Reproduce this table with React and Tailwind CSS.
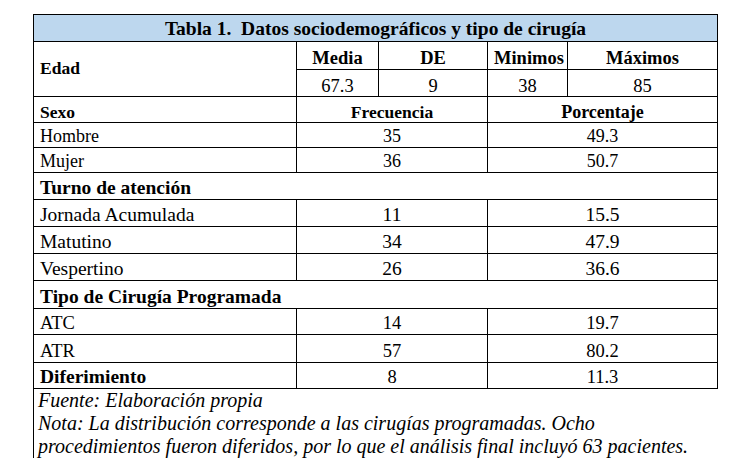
import React from "react";

const sexo = [
  ["Hombre", "35", "49.3"],
  ["Mujer", "36", "50.7"],
];

const turno = [
  ["Jornada Acumulada", "11", "15.5"],
  ["Matutino", "34", "47.9"],
  ["Vespertino", "26", "36.6"],
];

const cirugia = [
  ["ATC", "14", "19.7"],
  ["ATR", "57", "80.2"],
];

const cell = "border border-black px-[6px] p-0 align-bottom leading-none";

function DataRow({ label, freq, pct, h, size }) {
  return (
    <tr className={h}>
      <td className={`${cell} ${size} pb-[2px]`}>{label}</td>
      <td colSpan={2} className={`${cell} ${size} text-center pb-[2px]`}>
        {freq}
      </td>
      <td colSpan={2} className={`${cell} ${size} text-center pb-[2px]`}>
        {pct}
      </td>
    </tr>
  );
}

export default function App() {
  return (
    <div className="min-h-[475px] w-[747px] bg-white pl-[33px] pt-[14px] text-black font-['Liberation_Serif','Times_New_Roman',serif]">
      <table className="w-[684px] table-fixed border-collapse">
        <colgroup>
          <col className="w-[263px]" />
          <col className="w-[82px]" />
          <col className="w-[109px]" />
          <col className="w-[80px]" />
          <col className="w-[150px]" />
        </colgroup>
        <tbody>
          <tr className="h-[27px]">
            <td
              colSpan={5}
              className={`${cell} bg-[#bdd7ee] text-center text-[19.5px] font-bold whitespace-pre pb-[3px]`}
            >
              {"Tabla 1.  Datos sociodemográficos y tipo de cirugía"}
            </td>
          </tr>
          <tr className="h-[28px]">
            <td rowSpan={2} className={`${cell} align-middle text-[17.5px] font-bold`}>
              Edad
            </td>
            {["Media", "DE", "Minimos", "Máximos"].map((h) => (
              <td key={h} className={`${cell} text-center text-[18.5px] font-bold pb-[2px]`}>
                {h}
              </td>
            ))}
          </tr>
          <tr className="h-[27px]">
            {["67.3", "9", "38", "85"].map((v) => (
              <td key={v} className={`${cell} text-center text-[18.5px] pb-[1px]`}>
                {v}
              </td>
            ))}
          </tr>
          <tr className="h-[26px]">
            <td className={`${cell} text-[17.5px] font-bold pb-[1px]`}>Sexo</td>
            <td colSpan={2} className={`${cell} text-center text-[17.5px] font-bold pb-[1px]`}>
              Frecuencia
            </td>
            <td colSpan={2} className={`${cell} text-center text-[18px] font-bold pb-[1px]`}>
              Porcentaje
            </td>
          </tr>
          {sexo.map(([a, b, c]) => (
            <DataRow key={a} label={a} freq={b} pct={c} h="h-[25px]" size="text-[18px]" />
          ))}
          <tr className="h-[27px]">
            <td colSpan={5} className={`${cell} text-[19.5px] font-bold pb-[2px]`}>
              Turno de atención
            </td>
          </tr>
          {turno.map(([a, b, c]) => (
            <DataRow key={a} label={a} freq={b} pct={c} h="h-[27px]" size="text-[19.5px]" />
          ))}
          <tr className="h-[28px]">
            <td colSpan={5} className={`${cell} text-[19.5px] font-bold pb-[2px]`}>
              Tipo de Cirugía Programada
            </td>
          </tr>
          {cirugia.map(([a, b, c], i) => (
            <DataRow
              key={a}
              label={a}
              freq={b}
              pct={c}
              h={i === 0 ? "h-[26px]" : "h-[28px]"}
              size="text-[18.5px]"
            />
          ))}
          <tr className="h-[26px]">
            <td className={`${cell} text-[19.5px] font-bold pb-[2px]`}>Diferimiento</td>
            <td colSpan={2} className={`${cell} text-center text-[18.5px] pb-[2px]`}>
              8
            </td>
            <td colSpan={2} className={`${cell} text-center text-[18.5px] pb-[2px]`}>
              11.3
            </td>
          </tr>
        </tbody>
      </table>
      <div className="w-[684px] border-l border-black pl-[4px] text-[20px] italic leading-[23px]">
        <p>Fuente: Elaboración propia</p>
        <p>Nota: La distribución corresponde a las cirugías programadas. Ocho</p>
        <p>procedimientos fueron diferidos, por lo que el análisis final incluyó 63 pacientes.</p>
      </div>
    </div>
  );
}
